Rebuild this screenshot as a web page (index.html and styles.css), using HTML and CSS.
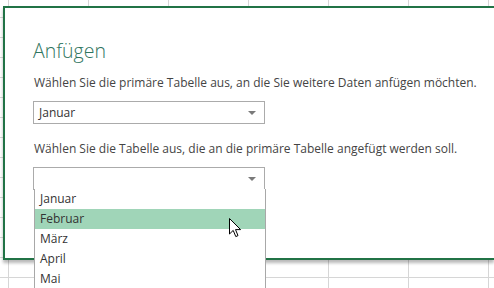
FILE: index.html
```html
<!DOCTYPE html>
<html lang="de">
<head>
  <meta charset="UTF-8" />
  <title>Anfügen</title>
  <link rel="stylesheet" href="styles.css">
</head>
<body>
  <div class="sheet">
    <div class="dialog">
      <h1 class="title">Anfügen</h1>
      <p class="prompt">Wählen Sie die primäre Tabelle aus, an die Sie weitere Daten anfügen möchten.</p>
      <div class="combo">
        <span class="value">Januar</span>
        <span class="arrow"></span>
      </div>
      <p class="prompt second">Wählen Sie die Tabelle aus, die an die primäre Tabelle angefügt werden soll.</p>
      <div class="combo open">
        <span class="value"></span>
        <span class="arrow"></span>
        <ul class="menu">
          <li>Januar</li>
          <li class="hover">Februar
            <svg class="pointer" width="13" height="20" viewBox="0 0 13 20">
              <path d="M0.5 0.5 L0.5 16 L4.2 12.4 L6.8 18.6 L9 17.6 L6.5 11.6 L11.6 11.6 Z" fill="#fff" stroke="#000" stroke-width="1" stroke-linejoin="miter"/>
            </svg>
          </li>
          <li>März</li>
          <li>April</li>
          <li>Mai</li>
        </ul>
      </div>
    </div>
  </div>
</body>
</html>
```

FILE: styles.css
```css
html, body { margin: 0; height: 100%; overflow: hidden; }
body { font-family: "Open Sans", "Noto Sans", sans-serif; color: #444; background: #fff; }

/* Tabellenraster im Hintergrund */
.sheet {
  position: relative;
  height: 100%;
  overflow: hidden;
  background-image:
    linear-gradient(to right, #d6d6d6 1px, transparent 1px),
    linear-gradient(to bottom, #d6d6d6 1px, transparent 1px);
  background-size: 80px 100%, 100% 20px;
  background-position: 8px 0, 0 17px;
}

/* Dialog läuft rechts über den Rand hinaus, daher kein rechter Rahmen */
.dialog {
  position: absolute;
  left: 3px;
  top: 6px;
  width: 491px;
  height: 254px;
  background: #fff;
  border: 2px solid #217346;
  border-right: none;
  box-shadow: 0 3px 3px rgba(0, 0, 0, 0.28);
  padding: 29px 0 0 28px;
  box-sizing: border-box;
}

.title {
  margin: 0;
  font-size: 19.5px;
  font-weight: 300;
  line-height: 27px;
  color: #2f7560;
}

.prompt {
  margin: 11px 0 0 1px;
  font-size: 12px;
  line-height: 16px;
  white-space: nowrap;
}
.prompt.second { margin-top: 17px; }

.combo {
  position: relative;
  width: 232px;
  height: 23px;
  margin-top: 10px;
  border: 1px solid #ababab;
  box-sizing: border-box;
  display: flex;
  align-items: center;
  padding-left: 5px;
  font-size: 12px;
  color: #333;
}
.combo .value { flex: 1; }
.combo .arrow {
  width: 0;
  height: 0;
  margin-right: 8px;
  border-left: 4px solid transparent;
  border-right: 4px solid transparent;
  border-top: 4px solid #7a7a7a;
}

.menu {
  position: absolute;
  top: 100%;
  left: 0;
  width: 232px;
  height: 99px;
  overflow: hidden;
  margin: 0;
  padding: 0;
  list-style: none;
  background: #fff;
  border-left: 1px solid #a8a8a8;
  border-right: 1px solid #a8a8a8;
  box-sizing: border-box;
}
.menu li {
  position: relative;
  height: 20px;
  line-height: 20px;
  padding-left: 5px;
  font-size: 12px;
  color: #333;
}
.menu li.hover { background: #a0d5b8; }
.pointer {
  position: absolute;
  left: 194px;
  top: 9px;
}
```
